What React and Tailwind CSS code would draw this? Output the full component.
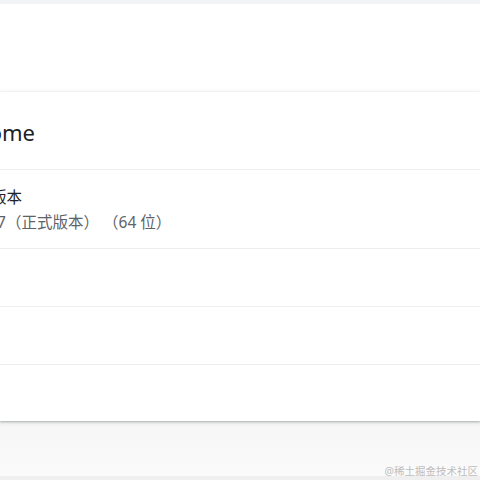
export default function App() {
  const font = { fontFamily: '"Noto Sans", "Noto Sans CJK SC", sans-serif' };
  return (
    <div className="relative w-[480px] h-[480px] overflow-hidden bg-white flex flex-col" style={font}>
      {/* top strip */}
      <div className="h-[4px] bg-[#f1f3f4] shrink-0"></div>
      {/* header space */}
      <div className="h-[88px] bg-white shrink-0"></div>

      {/* card */}
      <div className="relative z-10 bg-white shrink-0 shadow-[0_1px_2px_rgba(60,64,67,0.3),0_1px_4px_1px_rgba(60,64,67,0.12)]">
        <div className="h-[77px] flex items-center pt-[3px]">
          <div className="w-[35px] flex justify-end whitespace-nowrap">
            <span className="text-[22px] leading-none text-[#202124]">About Chrome</span>
          </div>
        </div>
        <div className="h-px bg-[#eeeeee]"></div>
        <div className="h-[78px] flex flex-col justify-center gap-[6px] pt-[2px]">
          <div className="w-[22px] flex justify-end whitespace-nowrap text-[15.5px] leading-[19px] text-[#202124]">
            Chrome 已是最新版本
          </div>
          <div className="flex whitespace-nowrap text-[15.5px] leading-[19px] text-[#5f6368]">
            <div className="w-[6px] flex justify-end">版本 120.0.6099.217</div>
            <span>（正式版本）</span>
            <span className="ml-[4px]">（64 位）</span>
          </div>
        </div>
        <div className="h-px bg-[#eeeeee]"></div>
        <div className="h-[57px]"></div>
        <div className="h-px bg-[#eeeeee]"></div>
        <div className="h-[57px]"></div>
        <div className="h-px bg-[#eeeeee]"></div>
        <div className="h-[56px]"></div>
      </div>

      {/* below card */}
      <div className="flex-1 bg-gradient-to-b from-[#f6f6f6] to-[#fbfbfb] flex flex-col justify-end">
        <div className="h-[4px] bg-[#efefef]"></div>
      </div>

      <div className="absolute right-[2px] bottom-[4px] text-[10.5px] leading-none text-[#bdbdbd]">
        @稀土掘金技术社区
      </div>
    </div>
  );
}
